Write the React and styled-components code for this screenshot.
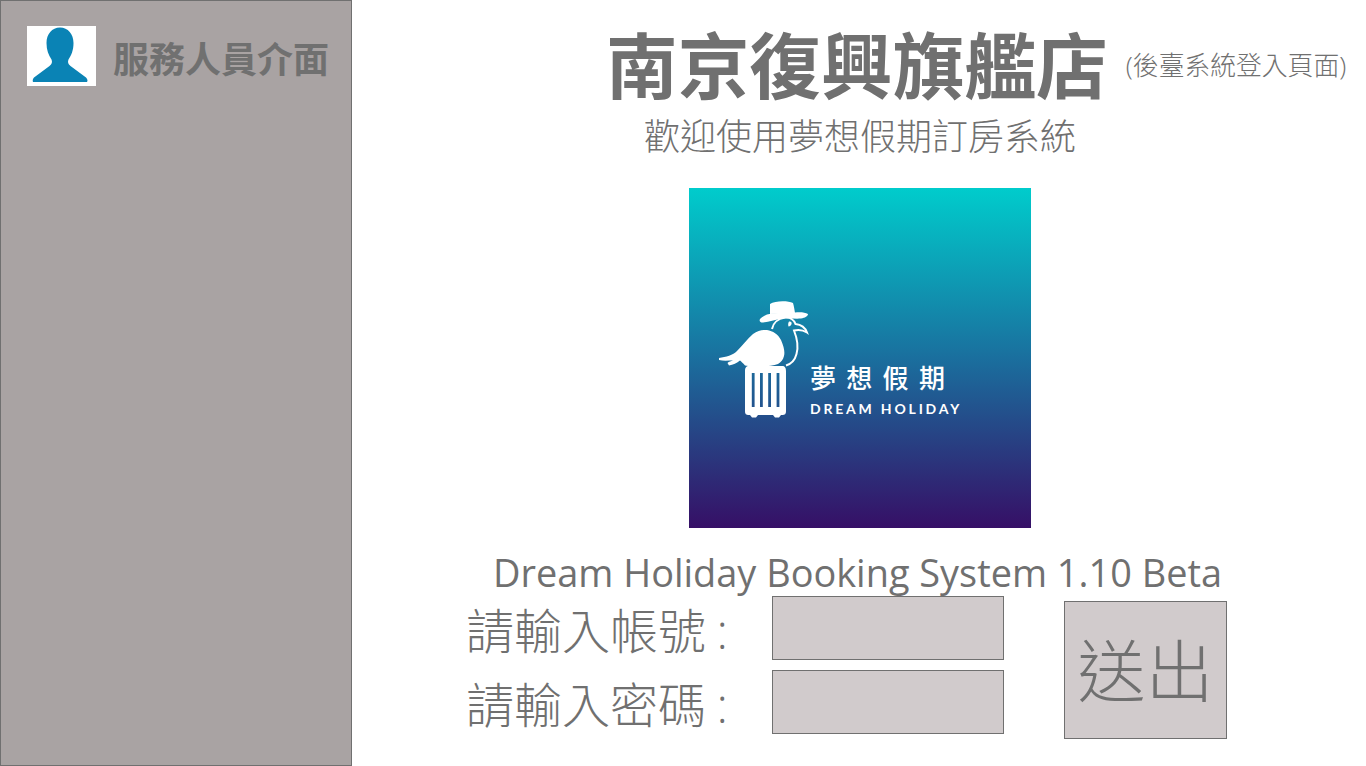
import React from "react";
import styled, { createGlobalStyle } from "styled-components";

const Global = createGlobalStyle`
  html, body { margin: 0; padding: 0; background: #fff; overflow: hidden; }
  * { box-sizing: border-box; }
`;
const FONT = `"Open Sans", "Noto Sans CJK TC", "Noto Sans", sans-serif`;
const INK = "#707070";

const Page = styled.div`
  display: flex;
  width: 1366px;
  height: 766px;
  font-family: ${FONT};
  color: ${INK};
`;
const Sidebar = styled.aside`
  flex: 0 0 352px;
  height: 766px;
  background: #a9a3a3;
  border: 1px solid ${INK};
  padding: 25px 0 0 26px;
`;
const SideHead = styled.div`
  display: flex;
  align-items: center;
  gap: 17px;
`;
const Avatar = styled.svg`
  display: block;
  flex: none;
  width: 69px;
  height: 60px;
  background: #fff;
`;
const SideTitle = styled.h2`
  margin: 8px 0 0;
  font-size: 36px;
  line-height: 52px;
  font-weight: 700;
  white-space: nowrap;
`;
const Main = styled.main`
  flex: 1;
  display: flex;
  flex-direction: column;
  min-width: 0;
`;
const Header = styled.header`
  display: flex;
  align-items: center;
  height: 130px;
  padding-left: 254px;
  white-space: nowrap;
`;
const Title = styled.h1`
  margin: 0;
  font-size: 71.700px;
  line-height: 130px;
  font-weight: 700;
`;
const Note = styled.span`
  margin-left: 18px;
  font-size: 25.800px;
  line-height: 30px;
  font-weight: 300;
`;
const Welcome = styled.p`
  margin: -17px 0 0 292px;
  font-size: 36px;
  line-height: 48px;
  font-weight: 300;
  white-space: nowrap;
`;
const Logo = styled.svg`
  display: block;
  width: 342px;
  height: 340px;
  margin: 27px 0 0 337px;
`;
const Version = styled.p`
  margin: 20px 0 0 141px;
  font-size: 37.900px;
  line-height: 48px;
  font-weight: 400;
  white-space: nowrap;
`;
const Form = styled.form`
  display: flex;
  align-items: flex-start;
  margin: 0 0 0 114px;
`;
const Fields = styled.div`
  display: flex;
  flex-direction: column;
  gap: 10px;
`;
const Field = styled.label`
  display: flex;
  align-items: center;
  height: 64px;
  font-size: 48px;
  font-weight: 300;
  white-space: nowrap;
`;
const FieldName = styled.span`
  flex: 0 0 306px;
  word-spacing: -2px;
`;
const Input = styled.input`
  width: 232px;
  height: 64px;
  background: #d1cbcc;
  border: 1px solid ${INK};
  border-radius: 0;
  padding: 0 8px;
`;
const Submit = styled.button`
  width: 163px;
  height: 138px;
  margin: 5px 0 0 60px;
  padding: 0 0 6px;
  background: #d1cbcc;
  border: 1px solid ${INK};
  border-radius: 0;
  color: ${INK};
  font-family: ${FONT};
  font-size: 68px;
  font-weight: 300;
  white-space: nowrap;
`;

export default function App() {
  return (
    <Page>
      <Global />
      <Sidebar>
        <SideHead>
          <Avatar viewBox="0 0 69 60" aria-hidden="true">
            <path
              fill="#0a83b5"
              d="M33 1.500C25 1.500 19.500 8 19.500 17C19.500 24 21.500 29 24.500 33.500C25.500 36 25 38 22.500 40L7 51.500C5.500 53 5.500 55 6 56H60C61 55 60.500 53 59 51.500L43.500 40C41 38 40.500 36 41.500 33.500C44.500 29 46.500 24 46.500 17C46.500 8 41 1.500 33 1.500Z"
            />
          </Avatar>
          <SideTitle>服務人員介面</SideTitle>
        </SideHead>
      </Sidebar>
      <Main>
        <Header>
          <Title>南京復興旗艦店</Title>
          <Note>(後臺系統登入頁面)</Note>
        </Header>
        <Welcome>歡迎使用夢想假期訂房系統</Welcome>
        <Logo viewBox="689 188 342 340" role="img" aria-label="夢想假期 Dream Holiday">
          <defs>
            <linearGradient id="logoBg" x1="0" y1="0" x2="0" y2="1">
              <stop offset="0" stopColor="#00cccc" />
              <stop offset="0.5" stopColor="#1a6f9e" />
              <stop offset="1" stopColor="#360f66" />
            </linearGradient>
          </defs>
          <rect x="689" y="188" width="342" height="340" fill="url(#logoBg)" />
          <g fill="#fff">
            <path d="M770 304C775 300.500 788 300.500 793 303C794 306 794.500 310 795 313L770 314C770 310 770 307 770 304Z" />
            <path d="M760 319C764 315 768 314 772 313.500C780 312.500 788 313 795 312.500C799 312 805 312 808 314C808 316 805 318 801 318.500C795 319 789 318 784 318.500C777 319 769 322 763 322.500C760 322.500 759 321 760 319Z" />
            <path d="M719 358C726 357 733 355 737 351C743 345 747 339 753 334C758 330.500 763 329.500 767 330C773 331 778 334 781 340C784 347 785 352 784 356C783 360 781 362 778 364C770 367 755 367 745 365.500C743 363 741 361.500 740 360.500C737 363 733 365 729 365.500L727.500 363C729 361.500 731 361 733 360.500C728 360.500 723 361 719 360Z" />
            <path fillRule="evenodd" d="M749 366H782C785 366 786 368 786 371V411C786 414 785 415 782 415H781L779 417.500H775L773 415H758L756 417.500H752L750 415H749C746 415 745 414 745 411V371C745 368 746 366 749 366ZM751.800 373V407H754.600V373ZM760 373V407H762.800V373ZM768.200 373V407H771V373ZM776.600 373V407H779.400V373Z" />
            <path d="M789 321.500C791 321 792 322.500 791.500 324C791 325.500 790 326.500 788.500 326.500C788 325 788 323 789 321.500Z" />
          </g>
          <path
            d="M772 329C773 323 778 318.500 785 317.500C790 317 794 320 795.500 324C800 324.500 805 327 807 332.500C803 330 798 329.500 794 330.500C797 338 798.500 347 796.500 354C795 360 791 364 786 365.500"
            fill="none"
            stroke="#fff"
            strokeWidth="2"
          />
          <text
            x="810"
            y="388"
            fill="#fff"
            fontFamily={`"Noto Sans CJK TC", sans-serif`}
            fontSize="26"
            fontWeight="500"
            letterSpacing="10.300"
          >
            夢想假期
          </text>
          <text
            x="810"
            y="414"
            fill="#fff"
            fontFamily={`"Lato", sans-serif`}
            fontSize="14"
            fontWeight="700"
            letterSpacing="2.800"
          >
            DREAM HOLIDAY
          </text>
        </Logo>
        <Version>Dream Holiday Booking System 1.10 Beta</Version>
        <Form>
          <Fields>
            <Field>
              <FieldName>請輸入帳號 :</FieldName>
              <Input type="text" />
            </Field>
            <Field>
              <FieldName>請輸入密碼 :</FieldName>
              <Input type="password" />
            </Field>
          </Fields>
          <Submit type="button">送出</Submit>
        </Form>
      </Main>
    </Page>
  );
}
